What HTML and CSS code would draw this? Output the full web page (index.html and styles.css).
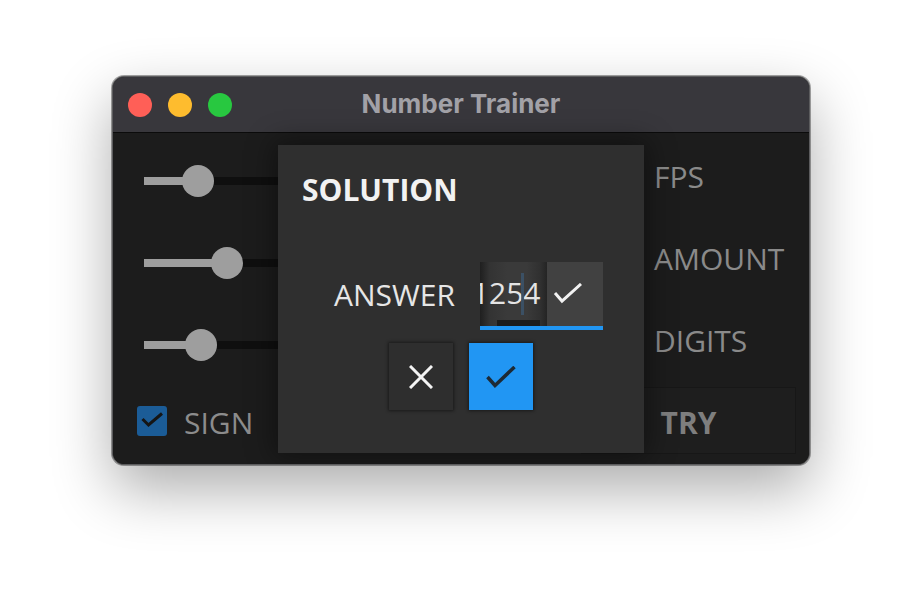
FILE: index.html
```html
<!DOCTYPE html>
<html lang="en">
<head>
<meta charset="utf-8">
<title>Number Trainer</title>
<link rel="stylesheet" href="styles.css">
</head>
<body>
<div class="window">
  <div class="titlebar">
    <div class="lights">
      <span class="light red"></span>
      <span class="light yellow"></span>
      <span class="light green"></span>
    </div>
    <div class="title">Number Trainer</div>
    <div></div>
  </div>
  <div class="content">
    <div class="slider-row">
      <div class="track"><div class="fill" style="width:54px"></div><div class="knob" style="left:38px"></div></div>
    </div>
    <div class="label-row">FPS</div>
    <div class="slider-row">
      <div class="track"><div class="fill" style="width:83px"></div><div class="knob" style="left:67px"></div></div>
    </div>
    <div class="label-row">AMOUNT</div>
    <div class="slider-row">
      <div class="track"><div class="fill" style="width:57px"></div><div class="knob" style="left:41px"></div></div>
    </div>
    <div class="label-row">DIGITS</div>
    <div class="check-row">
      <span class="checkbox">
        <svg width="30" height="30" viewBox="0 0 30 30"><polyline points="5.5,13 11.5,19 25,7.5" fill="none" stroke="#151515" stroke-width="3"/></svg>
      </span>
      <span class="check-label">SIGN</span>
    </div>
    <div class="try-cell"><div class="try-btn">TRY</div></div>

    <div class="dialog">
      <div class="dialog-title">SOLUTION</div>
      <div class="answer-row">
        <span class="answer-label">ANSWER</span>
        <div class="input-group">
          <div class="input-top">
            <div class="spin">
              <span class="spin-text">1254</span>
              <span class="cursor"></span>
              <span class="spin-bar"></span>
            </div>
            <div class="input-ok">
              <svg width="30" height="22" viewBox="0 0 30 22"><polyline points="2,10 9,18 28,1" fill="none" stroke="#f2f2f2" stroke-width="3"/></svg>
            </div>
          </div>
          <div class="underline"></div>
        </div>
      </div>
      <div class="buttons">
        <div class="btn btn-cancel">
          <svg width="24" height="24" viewBox="0 0 24 24"><path d="M1 1 L23 23 M23 1 L1 23" fill="none" stroke="#f4f4f4" stroke-width="3"/></svg>
        </div>
        <div class="btn btn-ok">
          <svg width="30" height="22" viewBox="0 0 30 22"><polyline points="1.5,11 9,19.5 28.5,1" fill="none" stroke="#1d2a35" stroke-width="3.5"/></svg>
        </div>
      </div>
    </div>
  </div>
</div>
</body>
</html>
```

FILE: styles.css
```css
* { box-sizing: border-box; }

html, body {
  margin: 0;
  padding: 0;
  background: #ffffff;
}

body {
  width: 922px;
  height: 614px;
  overflow: hidden;
  padding-top: 76px;
  font-family: "Open Sans", "Noto Sans", sans-serif;
}

.window {
  width: 698px;
  height: 389px;
  margin: 0 auto;
  border: 1px solid #5c5c5e;
  border-radius: 12px;
  overflow: hidden;
  background: #1c1c1c;
  box-shadow: 0 24px 60px rgba(0, 0, 0, 0.33), 0 0 0 1px rgba(0, 0, 0, 0.35);
}

.titlebar {
  height: 56px;
  background: #38373c;
  border-bottom: 1px solid #0b0b0b;
  display: grid;
  grid-template-columns: 1fr auto 1fr;
  align-items: center;
}

.lights {
  display: flex;
  gap: 16px;
  padding-left: 15px;
  padding-top: 1px;
}

.light {
  width: 24px;
  height: 24px;
  border-radius: 50%;
}
.red { background: #ff5f57; }
.yellow { background: #febc2e; }
.green { background: #28c840; }

.title {
  font-family: Inter, "Open Sans", sans-serif;
  font-weight: 700;
  font-size: 26px;
  color: #a2a1a7;
  padding-bottom: 3px;
}

.content {
  position: relative;
  height: 331px;
  display: grid;
  grid-template-columns: 1fr 215px;
  grid-template-rows: 82px 82px 82px 1fr;
  padding: 7px 13px 10px 0;
  background: #1c1c1c;
}

.slider-row {
  display: flex;
  align-items: center;
  padding-left: 31px;
  padding-right: 16px;
}

.track {
  position: relative;
  flex: 1;
  height: 8px;
  background: #0f0f0f;
}

.fill {
  height: 8px;
  background: #9e9e9e;
}

.knob {
  position: absolute;
  top: -12px;
  width: 32px;
  height: 32px;
  border-radius: 50%;
  background: #9e9e9e;
}

.label-row {
  display: flex;
  align-items: center;
  padding-left: 73px;
  padding-bottom: 10px;
  font-size: 30px;
  color: #8a8a8a;
}

.check-row {
  display: flex;
  align-items: center;
  gap: 17px;
  padding-left: 24px;
  padding-top: 2px;
}

.checkbox {
  width: 30px;
  height: 30px;
  border-radius: 3px;
  background: #1b5c97;
  display: flex;
}

.check-label {
  font-size: 30px;
  color: #8c8c8c;
  padding-top: 3px;
}

.try-cell {
  display: flex;
  align-items: flex-start;
  padding-top: 1px;
}

.try-btn {
  width: 100%;
  height: 67px;
  background: #1e1e1e;
  border: 1px solid #171717;
  display: flex;
  align-items: center;
  justify-content: center;
  font-weight: 700;
  font-size: 30px;
  color: #7e7e7e;
  padding-top: 3px;
}

.dialog {
  position: absolute;
  left: 165px;
  top: 12px;
  width: 366px;
  height: 308px;
  background: #2f2f2f;
  box-shadow: 0 0 26px 4px rgba(0, 0, 0, 0.4);
  padding: 25px 24px 0 24px;
  display: flex;
  flex-direction: column;
}

.dialog-title {
  font-weight: 700;
  font-size: 30px;
  line-height: 40px;
  color: #f2f2f2;
}

.answer-row {
  margin-top: 52px;
  margin-left: 32px;
  display: flex;
  align-items: center;
  gap: 25px;
  height: 68px;
}

.answer-label {
  font-size: 30px;
  line-height: 40px;
  color: #e6e6e6;
  padding-bottom: 2px;
}

.input-group {
  width: 123px;
  height: 68px;
  display: flex;
  flex-direction: column;
}

.input-top {
  height: 64px;
  display: flex;
}

.spin {
  position: relative;
  width: 67px;
  height: 64px;
  overflow: hidden;
  background: linear-gradient(90deg, #1f1f1f 0%, #333 14%, #3a3a3a 40%, #3a3a3a 70%, #303030 90%, #242424 100%);
  display: flex;
  align-items: center;
}

.spin-text {
  margin-left: -8px;
  font-size: 30px;
  line-height: 40px;
  color: #e4e4e4;
  padding-bottom: 2px;
}

.cursor {
  position: absolute;
  left: 41px;
  top: 11px;
  width: 3px;
  height: 42px;
  background: rgba(60, 88, 115, 0.75);
}

.spin-bar {
  position: absolute;
  left: 17px;
  bottom: 0;
  width: 43px;
  height: 6px;
  background: #1b1b1b;
}

.input-ok {
  flex: 1;
  background: #414141;
  display: flex;
  align-items: center;
  justify-content: center;
  padding-right: 14px;
}

.underline {
  height: 4px;
  background: #2196f3;
}

.buttons {
  margin-top: 13px;
  display: flex;
  justify-content: center;
  gap: 16px;
}

.btn {
  width: 64px;
  height: 67px;
  display: flex;
  align-items: center;
  justify-content: center;
  box-shadow: 0 0 3px 1px rgba(0, 0, 0, 0.45);
}

.btn-cancel {
  background: #2e2e2e;
}

.btn-ok {
  background: #2196f3;
}
```
